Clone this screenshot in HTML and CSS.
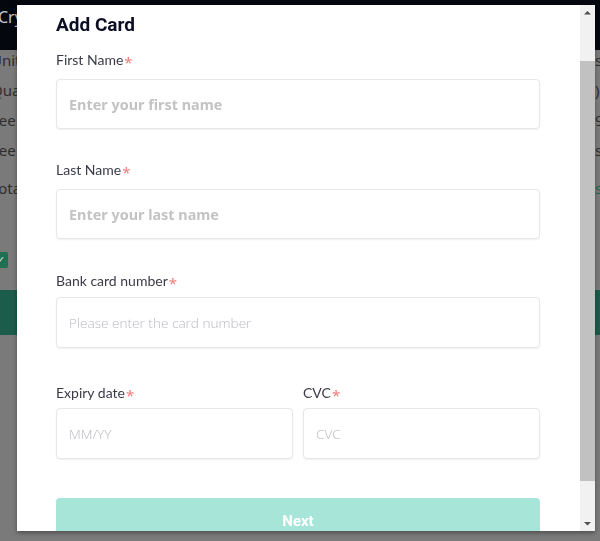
FILE: index.html
```html
<!DOCTYPE html>
<html lang="en">
<head>
<meta charset="utf-8">
<title>Add Card</title>
<link rel="stylesheet" href="styles.css">
</head>
<body>
<div class="page">
  <header class="topbar"><span class="brand">Crypto</span></header>
  <section class="summary">
    <div class="row"><span class="k">Unit price</span><span class="v">s</span></div>
    <div class="row"><span class="k">Quantity</span><span class="v">)</span></div>
    <div class="row"><span class="k">Fee rate</span><span class="v">9,</span></div>
    <div class="row"><span class="k">Fee</span><span class="v">s</span></div>
    <div class="row total"><span class="k">Total</span><span class="v green">s</span></div>
  </section>
  <div class="agree"><span class="check">&#10003;</span></div>
  <div class="buybar"></div>
</div>

<div class="modal">
  <div class="modal-body">
    <h2 class="title">Add Card</h2>
    <div class="field first">
      <label class="label">First Name<span class="req">*</span></label>
      <input class="input bold" type="text" placeholder="Enter your first name">
    </div>
    <div class="field second">
      <label class="label">Last Name<span class="req">*</span></label>
      <input class="input bold" type="text" placeholder="Enter your last name">
    </div>
    <div class="field card">
      <label class="label">Bank card number<span class="req">*</span></label>
      <input class="input light" type="text" placeholder="Please enter the card number">
    </div>
    <div class="split">
      <div class="field">
        <label class="label">Expiry date<span class="req">*</span></label>
        <input class="input light" type="text" placeholder="MM/YY">
      </div>
      <div class="field">
        <label class="label">CVC<span class="req">*</span></label>
        <input class="input light" type="text" placeholder="CVC">
      </div>
    </div>
    <button class="next" type="button">Next</button>
  </div>
  <div class="scrollbar">
    <div class="arrow">
      <svg width="15" height="15" viewBox="0 0 15 15"><path d="M4 9.5 L7.5 6 L11 9.5 Z" fill="#505050"/></svg>
    </div>
    <div class="track"><div class="thumb"></div></div>
    <div class="arrow">
      <svg width="15" height="15" viewBox="0 0 15 15"><path d="M4 6 L7.5 9.5 L11 6 Z" fill="#505050"/></svg>
    </div>
  </div>
</div>
</body>
</html>
```

FILE: styles.css
```css
html, body {
  margin: 0;
  padding: 0;
  width: 600px;
  height: 541px;
  overflow: hidden;
}
body {
  background: #7a7a7a;
  font-family: "Noto Sans", "Open Sans", sans-serif;
}
.page {
  width: 600px;
}
.topbar {
  height: 50px;
  background: #05070f;
  display: flex;
  align-items: flex-start;
}
.brand {
  margin-left: -2px;
  margin-top: 6px;
  color: #c3c6ce;
  font-size: 16px;
  line-height: 22px;
}
.summary {
  display: flex;
  flex-direction: column;
}
.row {
  display: grid;
  grid-template-columns: 595px 1fr;
  height: 30px;
  line-height: 20px;
  font-size: 15px;
  color: #2e2e2e;
  white-space: nowrap;
}
.row .k {
  margin-left: -9px;
}
.row.total { margin-top: 8px; }
.v.green { color: #1c6a4f; }
.agree {
  margin-top: 44px;
  height: 16px;
  display: flex;
}
.check {
  margin-left: -8px;
  width: 16px;
  height: 16px;
  background: #1f6f53;
  border-radius: 2px;
  color: #d8e8e0;
  font-size: 11px;
  line-height: 16px;
  text-align: center;
}
.buybar {
  margin-top: 22px;
  height: 45px;
  background: #1b5c4b;
}

.modal {
  position: fixed;
  top: 5px;
  left: 17px;
  width: 578px;
  height: 526px;
  background: #fff;
  display: flex;
  box-shadow: 0 2px 4px rgba(0, 0, 0, 0.35);
}
.modal-body {
  flex: 1;
  min-width: 0;
  overflow: hidden;
  padding: 8px 40px 0 39px;
}
.scrollbar {
  width: 15px;
  display: flex;
  flex-direction: column;
  background: #f1f1f1;
}
.arrow {
  height: 15px;
  display: flex;
  align-items: center;
  justify-content: center;
}
.track {
  flex: 1;
  display: flex;
  flex-direction: column;
  padding-top: 41px;
}
.thumb {
  height: 420px;
  background: #c1c1c1;
}
.title {
  margin: 0 0 13px;
  font-family: Roboto, sans-serif;
  font-weight: 700;
  font-size: 19px;
  line-height: 24px;
  color: #0c0f24;
}
.field {
  display: flex;
  flex-direction: column;
}
.label {
  font-family: Lato, sans-serif;
  font-size: 14px;
  line-height: 20px;
  color: #3a3b47;
}
.req {
  font-family: "Noto Sans", sans-serif;
  font-size: 15px;
  color: #f47b7b;
  margin-left: 1px;
  vertical-align: -3px;
  line-height: 1;
}
.input {
  box-sizing: border-box;
  width: 100%;
  margin: 0;
  border: 1px solid #e7e7e7;
  border-radius: 4px;
  background: #fff;
  box-shadow: 0 1px 2px rgba(0, 0, 0, 0.06);
  padding: 0 12px;
  outline: none;
}
.input.bold {
  height: 50px;
  font-family: "Noto Sans", sans-serif;
  font-weight: 700;
  font-size: 14.4px;
}
.input.bold::placeholder { color: #c3c3c3; }
.input.light {
  height: 51px;
  font-family: "Open Sans", sans-serif;
  font-weight: 300;
  font-size: 13.6px;
}
.input.light::placeholder { color: #b9b9c0; }
.field.first .label { margin-bottom: 9px; }
.field.first { margin-bottom: 31px; }
.field.second .label { margin-bottom: 9px; }
.field.second { margin-bottom: 32px; }
.field.card .label { margin-bottom: 6px; }
.field.card { margin-bottom: 35px; }
.split {
  display: grid;
  grid-template-columns: 1fr 1fr;
  gap: 10px;
  margin-bottom: 39px;
}
.split .label { margin-bottom: 5px; }
.next {
  display: block;
  width: 100%;
  height: 46px;
  border: none;
  border-radius: 4px;
  background: #a8e5d9;
  color: #fff;
  font-family: Roboto, sans-serif;
  font-weight: 700;
  font-size: 15px;
}
```
